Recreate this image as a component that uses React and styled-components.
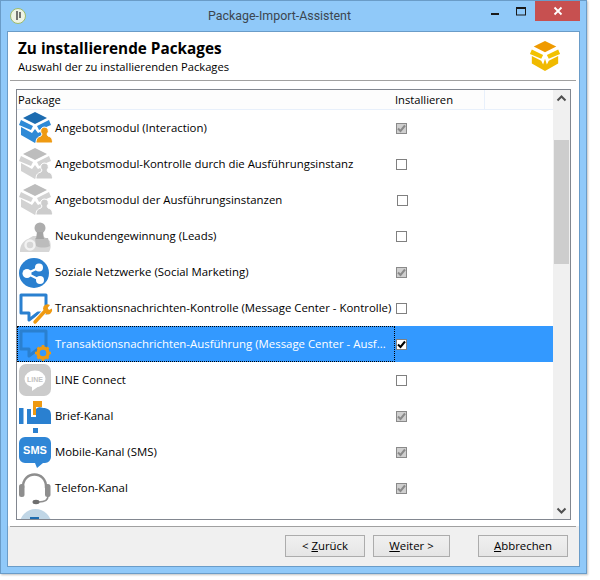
import styled, { createGlobalStyle } from 'styled-components';

const Global = createGlobalStyle`
  html, body { margin: 0; padding: 0; background: #fff; }
  * { box-sizing: border-box; }
`;

const Page = styled.div`
  width: 600px;
  height: 580px;
  padding-right: 13px;
  padding-bottom: 6px;
  font-family: 'Open Sans', 'Liberation Sans', sans-serif;
  font-size: 11.4px;
  color: #000;
`;
const Win = styled.div`
  height: 100%;
  background: #90c9f9;
  border: 1px solid #6a9cc8;
  box-shadow: 1px 1px 2px rgba(0, 0, 0, 0.25);
  padding: 0 6px 6px;
  display: flex;
  flex-direction: column;
`;
const TitleBar = styled.div`
  height: 30px;
  flex: none;
  display: flex;
  align-items: center;
  position: relative;
`;
const AppIcon = styled.svg`
  width: 16px;
  height: 16px;
  margin-left: 3px;
`;
const TitleText = styled.div`
  position: absolute;
  left: 0;
  right: 28px;
  top: 6px;
  text-align: center;
  font-family: Roboto, 'Open Sans', sans-serif;
  font-size: 12.4px;
  line-height: 18px;
  color: #3c4650;
`;
const WinButtons = styled.div`
  margin-left: auto;
  align-self: flex-start;
  display: flex;
  align-items: flex-start;
`;
const CapButton = styled.div`
  width: ${(p) => p.$w}px;
  height: 20px;
  display: flex;
  align-items: center;
  justify-content: center;
  background: ${(p) => p.$bg || 'transparent'};
`;
const Client = styled.div`
  flex: 1;
  border: 1px solid #6a9cc8;
  background: #f0f0f0;
  display: flex;
  flex-direction: column;
  min-height: 0;
`;
const Header = styled.div`
  height: 48px;
  flex: none;
  background: #fff;
  padding: 7px 18px 0 10px;
  display: flex;
  justify-content: space-between;
`;
const Heading = styled.div`
  font-size: 15.3px;
  font-weight: bold;
  line-height: 18px;
`;
const SubHeading = styled.div`
  font-size: 11.2px;
  line-height: 15px;
  margin-top: 2px;
`;
const Logo = styled.svg`
  width: 32px;
  height: 32px;
  margin-top: 1px;
`;
const Rule = styled.div`
  height: 1px;
  flex: none;
  margin: 0 3px 0 2px;
  background: #a0a0a0;
`;
const RuleBack = styled.div`
  flex: none;
  background: #fff;
`;
const Body = styled.div`
  height: 445px;
  flex: none;
  background: #fff;
  padding: 8px 8px 0;
`;
const ListBox = styled.div`
  height: 431px;
  border: 1px solid #828790;
  display: flex;
  background: #fff;
`;
const ListMain = styled.div`
  flex: 1;
  min-width: 0;
  overflow: hidden;
`;
const ColHeader = styled.div`
  height: 20px;
  display: grid;
  grid-template-columns: 378px 90px 1fr;
  border-bottom: 1px solid #e8f0fb;
  background: #fdfdfd;
`;
const ColCell = styled.div`
  font-size: 11.2px;
  line-height: 19px;
  padding-left: ${(p) => p.$pad}px;
  border-right: ${(p) => (p.$edge ? '1px solid #e8f0fb' : 'none')};
`;
const Row = styled.div`
  height: 36px;
  display: grid;
  grid-template-columns: 378px 1fr;
  align-items: center;
  background: ${(p) => (p.$selected ? '#3399ff' : '#fff')};
  color: ${(p) => (p.$selected ? '#fff' : '#000')};
`;
const NameCell = styled.div`
  height: 100%;
  display: flex;
  align-items: center;
  gap: 2px;
  padding-left: 2px;
  outline: ${(p) => (p.$selected ? '1px dotted #000' : 'none')};
  outline-offset: -1px;
  white-space: nowrap;
  overflow: hidden;
`;
const Label = styled.span`
  margin-bottom: 2px;
`;
const Icon = styled.svg`
  width: 34px;
  height: 34px;
  flex: none;
`;
const Check = styled.div`
  width: 11px;
  height: 11px;
  margin-left: ${(p) => p.$ml}px;
  border: 1px solid ${(p) => (p.$dim ? '#8a8a8a' : '#808080')};
  background: ${(p) => (p.$dim ? '#cfcfcf' : '#fff')};
  display: flex;
  align-items: center;
  justify-content: center;
`;
const ScrollBar = styled.div`
  width: 17px;
  flex: none;
  background: #f0f0f0;
  display: flex;
  flex-direction: column;
  align-items: center;
`;
const ScrollArrow = styled.svg`
  width: 17px;
  height: 17px;
  flex: none;
`;
const ScrollTrack = styled.div`
  flex: 1;
  align-self: stretch;
  padding-top: 33px;
`;
const ScrollThumb = styled.div`
  height: 124px;
  background: #cdcdcd;
  margin: 0 1px;
`;
const Footer = styled.div`
  flex: 1;
  display: flex;
  align-items: flex-start;
  padding: 8px 11px 0 0;
  justify-content: flex-end;
`;
const Button = styled.div`
  width: ${(p) => p.$w}px;
  height: 22px;
  margin-left: ${(p) => p.$ml}px;
  border: 1px solid #acacac;
  background: linear-gradient(#f0f0f0, #e5e5e5);
  line-height: 20px;
  text-align: center;
`;

const Cube = ({ top, side, person }) => (
  <>
    <path d="M16 1 L28 7 L16 13 L4 7 Z" fill={top} />
    <path d="M2 9 L14 15 L12 19 L0 14 Z M30 9 L18 15 L20 19 L32 14 Z" fill={side} />
    <path d="M2 16 L13 22 L16 18 L19 22 L23 20 L23 25 L16 32 L2 24 Z" fill={side} />
    {person && (
      <path d="M25 16 a4 4 0 0 1 3 7 l1 2 c3 1 4.500 2 4.500 7 H17 c0-5 2-6 5-7 l1-2 a4 4 0 0 1 2-7 Z" fill={person} stroke="#fff" strokeWidth="1" />
    )}
  </>
);

const icons = {
  offer: <Cube top="#1d6cb0" side="#2f8ad6" person="#ef9a12" />,
  offerDim: <Cube top="#bdbdbd" side="#d2d2d2" person="#cccccc" />,
  leads: (
    <>
      <path d="M1 33 C1 26 4 22 9 20 L14 17 H24 L31 22 C32 26 32 30 30 33 Z" fill="#d6d6d6" />
      <circle cx="11" cy="26" r="4.500" fill="none" stroke="#f2f2f2" strokeWidth="2.400" />
      <path d="M16 19 H29 L31 27 C27 29 21 29 17 27 Z" fill="#bcbcbc" />
      <circle cx="21" cy="9" r="5.500" fill="#adadad" />
      <path d="M18 13 H24 L25 20 H17 Z" fill="#a4a4a4" />
    </>
  ),
  social: (
    <>
      <circle cx="15" cy="18" r="15" fill="#2a80d0" />
      <path d="M8 18.500 L20 12.500 M8 18.500 L21 25" stroke="#fff" strokeWidth="2" />
      <circle cx="8" cy="18.500" r="4.500" fill="#fff" />
      <circle cx="20" cy="12.500" r="4" fill="#fff" />
      <circle cx="21" cy="25" r="4" fill="#fff" />
    </>
  ),
  msgTool: (
    <>
      <path d="M2 4 H27 V22 H19 L10 29 V22 H2 Z" fill="#fff" stroke="#2a80d0" strokeWidth="3" strokeLinejoin="round" />
      <path d="M16 31 L27 19" stroke="#fff" strokeWidth="5.500" />
      <path d="M16 31 L27 19" stroke="#ef9a12" strokeWidth="3.400" strokeLinecap="round" />
      <path d="M24 18 a4.500 4.500 0 0 1 7 -4 l-2.500 3 1.500 2 3 -1.500 a4.500 4.500 0 0 1 -6 5.500 Z" fill="#ef9a12" />
    </>
  ),
  msgGear: (
    <>
      <path d="M2 4 H27 V22 H19 L10 29 V22 H2 Z" fill="#3399ff" stroke="#2a80d0" strokeWidth="3" strokeLinejoin="round" />
      <circle cx="24" cy="26" r="5" fill="#3399ff" stroke="#ef9a12" strokeWidth="3.400" />
      <path d="M24 18 V21 M24 31 V34 M16 26 H19 M29 26 H32 M18.500 20.500 L20.500 22.500 M27.500 29.500 L29.500 31.500 M29.500 20.500 L27.500 22.500 M20.500 29.500 L18.500 31.500" stroke="#ef9a12" strokeWidth="2.600" />
    </>
  ),
  line: (
    <>
      <rect x="0" y="1" width="32" height="32" rx="7" fill="#cbcbcb" />
      <ellipse cx="16" cy="16" rx="10.500" ry="8.500" fill="#fff" />
      <path d="M13 23 L13 28 L20 23 Z" fill="#fff" />
      <text x="16" y="18.500" textAnchor="middle" fontSize="7" fontWeight="bold" fontFamily="Liberation Sans" fill="#c2c2c2">LINE</text>
    </>
  ),
  mail: (
    <>
      <rect x="0" y="9" width="4.500" height="16" fill="#2a80d0" />
      <path d="M8 10 H12 V18 H17 V10 C19 8 22 8 24 9 C29 9 32 11 32 16 V25 H8 Z" fill="#2a80d0" />
      <path d="M14 2 H23 V8 H17 V16 H14 Z" fill="#ef9a12" />
      <rect x="14" y="29" width="5" height="5" fill="#2a80d0" />
    </>
  ),
  sms: (
    <>
      <path d="M6 2 H26 a6 6 0 0 1 6 6 V22 a6 6 0 0 1 -6 6 H24 L18 33 L16 28 H6 a6 6 0 0 1 -6 -6 V8 a6 6 0 0 1 6 -6 Z" fill="#2f86d6" />
      <text x="16" y="19" textAnchor="middle" fontSize="11" fontWeight="bold" fontFamily="Liberation Sans" fill="#fff">SMS</text>
    </>
  ),
  phone: (
    <>
      <path d="M4 17 C3 -1 28 -1 27 17" fill="none" stroke="#8e8e8e" strokeWidth="2.400" />
      <rect x="0" y="13" width="5.500" height="13" rx="2.500" fill="#8e8e8e" />
      <rect x="26" y="13" width="5.500" height="13" rx="2.500" fill="#8e8e8e" />
      <path d="M29 25 C29 30 24 31 20 31" fill="none" stroke="#8e8e8e" strokeWidth="1.600" />
      <ellipse cx="17" cy="31" rx="3.500" ry="2.200" fill="#6e6e6e" />
    </>
  ),
  crm: (
    <>
      <circle cx="16.500" cy="18" r="16" fill="#c0d6e6" />
      <rect x="11" y="10" width="9" height="7" fill="#1d6cb0" />
    </>
  ),
};

const rows = [
  { icon: 'offer', name: 'Angebotsmodul (Interaction)', state: 'dim', ml: 1 },
  { icon: 'offerDim', name: 'Angebotsmodul-Kontrolle durch die Ausführungsinstanz', state: 'off', ml: 1 },
  { icon: 'offerDim', name: 'Angebotsmodul der Ausführungsinstanzen', state: 'off', ml: 2 },
  { icon: 'leads', name: 'Neukundengewinnung (Leads)', state: 'off', ml: 1 },
  { icon: 'social', name: 'Soziale Netzwerke (Social Marketing)', state: 'dim', ml: 1 },
  { icon: 'msgTool', name: 'Transaktionsnachrichten-Kontrolle (Message Center - Kontrolle)', state: 'off', ml: 1 },
  { icon: 'msgGear', name: 'Transaktionsnachrichten-Ausführung (Message Center - Ausf...', state: 'on', ml: 1, selected: true },
  { icon: 'line', name: 'LINE Connect', state: 'off', ml: 1 },
  { icon: 'mail', name: 'Brief-Kanal', state: 'dim', ml: 1 },
  { icon: 'sms', name: 'Mobile-Kanal (SMS)', state: 'dim', ml: 1 },
  { icon: 'phone', name: 'Telefon-Kanal', state: 'dim', ml: 1 },
  { icon: 'crm', name: '', state: 'none', ml: 1 },
];

const Tick = ({ color }) => (
  <svg width="9" height="9" viewBox="0 0 9 9">
    <path d="M1 4.500 L3.500 7 L8 1.500" fill="none" stroke={color} strokeWidth="2" />
  </svg>
);

export default function App() {
  return (
    <Page>
      <Global />
      <Win>
        <TitleBar>
          <AppIcon viewBox="0 0 16 16">
            <circle cx="8" cy="8" r="7.500" fill="#eef3e4" stroke="#9dbb6a" />
            <path d="M7 3 V12 M10 4 V10" stroke="#555" strokeWidth="1.600" />
          </AppIcon>
          <TitleText>Package-Import-Assistent</TitleText>
          <WinButtons>
            <CapButton $w={26}>
              <svg width="10" height="10" viewBox="0 0 10 10"><rect x="1" y="7" width="8" height="2" fill="#1a1a1a" /></svg>
            </CapButton>
            <CapButton $w={27}>
              <svg width="11" height="9" viewBox="0 0 11 9"><rect x="0.500" y="0.500" width="9" height="7.500" fill="none" stroke="#1a1a1a" /><rect x="0" y="0" width="10" height="2" fill="#1a1a1a" /></svg>
            </CapButton>
            <CapButton $w={45} $bg="#c75050">
              <svg width="10" height="10" viewBox="0 0 10 10"><path d="M1.500 1.500 L8.500 8.500 M8.500 1.500 L1.500 8.500" stroke="#fff" strokeWidth="1.800" /></svg>
            </CapButton>
          </WinButtons>
        </TitleBar>
        <Client>
          <Header>
            <div>
              <Heading>Zu installierende Packages</Heading>
              <SubHeading>Auswahl der zu installierenden Packages</SubHeading>
            </div>
            <Logo viewBox="0 0 34 34">
              <path d="M17 1 L29 7 L17 13 L5 7 Z" fill="#ef9a00" />
              <path d="M3 10 L15 16 L13 20 L1 15 Z M31 10 L19 16 L21 20 L33 15 Z" fill="#f2c200" />
              <path d="M3 17 L13 22 L15 26 L17 20 L19 26 L21 22 L31 17 V25 L17 33 L3 25 Z" fill="#f0ba00" />
            </Logo>
          </Header>
          <RuleBack><Rule /></RuleBack>
          <Body>
            <ListBox>
              <ListMain>
                <ColHeader>
                  <ColCell $pad={1}>Package</ColCell>
                  <ColCell $pad={0} $edge>Installieren</ColCell>
                  <ColCell $pad={0} />
                </ColHeader>
                {rows.map((r, i) => (
                  <Row key={i} $selected={r.selected}>
                    <NameCell $selected={r.selected}>
                      <Icon viewBox="0 0 34 34">{icons[r.icon]}</Icon>
                      <Label>{r.name}</Label>
                    </NameCell>
                    {r.state !== 'none' && (
                      <Check $ml={r.ml} $dim={r.state === 'dim'}>
                        {r.state === 'dim' && <Tick color="#8a8a8a" />}
                        {r.state === 'on' && <Tick color="#000" />}
                      </Check>
                    )}
                  </Row>
                ))}
              </ListMain>
              <ScrollBar>
                <ScrollArrow viewBox="0 0 17 17"><path d="M4.500 10.500 L8.500 6.500 L12.500 10.500" fill="none" stroke="#505050" strokeWidth="2" /></ScrollArrow>
                <ScrollTrack><ScrollThumb /></ScrollTrack>
                <ScrollArrow viewBox="0 0 17 17"><path d="M4.500 6.500 L8.500 10.500 L12.500 6.500" fill="none" stroke="#505050" strokeWidth="2" /></ScrollArrow>
              </ScrollBar>
            </ListBox>
          </Body>
          <Rule />
          <Footer>
            <Button $w={80}>&lt; <u>Z</u>urück</Button>
            <Button $w={77} $ml={8}><u>W</u>eiter &gt;</Button>
            <Button $w={90} $ml={28}><u>A</u>bbrechen</Button>
          </Footer>
        </Client>
      </Win>
    </Page>
  );
}
